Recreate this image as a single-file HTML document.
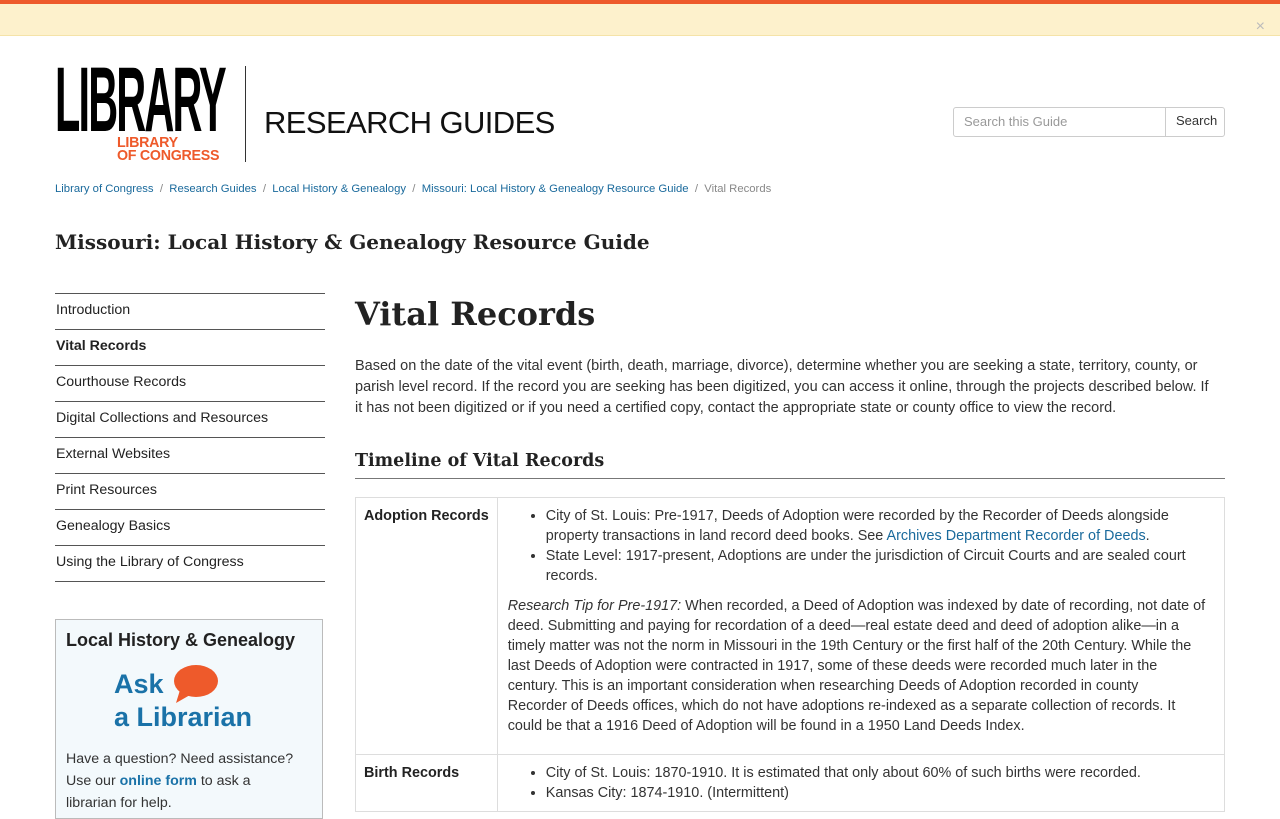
<!DOCTYPE html>
<html><head><meta charset="utf-8"><style>
*{box-sizing:border-box}
body{margin:0;background:#fff;font-family:"Liberation Sans",sans-serif;color:#333;font-size:14px;width:1280px;height:800px;overflow:hidden;position:relative}
a{color:#1a6a9c;text-decoration:none}
.topbar{position:absolute;left:0;top:0;width:1280px;height:4px;background:#ee5a2b}
.alert{position:absolute;left:0;top:4px;width:1280px;height:32px;background:#fdf1cc;border-bottom:1px solid #f5e3a8}
.x{position:absolute;right:15px;top:14px;color:#bbb;font-size:16px}
.abs{position:absolute}
.serif{font-family:"DejaVu Serif","Liberation Serif",serif;font-weight:bold;color:#222}
.nav{position:absolute;left:55px;top:293px;width:270px;border-top:1px solid #555}
.nav div{height:36px;border-bottom:1px solid #555;padding:7px 1px;font-size:14.2px;color:#222;line-height:18px}
.box{position:absolute;left:55px;top:619px;width:268px;height:200px;border:1px solid #bbb;background:#f3f9fc;padding:10px}
table{position:absolute;left:355px;top:497px;width:870px;border-collapse:collapse}
td{border:1px solid #ddd;vertical-align:top;padding:8px;font-size:14.4px;line-height:20px}
ul{margin:0;padding-left:40px}
p{margin:0}
</style></head><body>
<div class="topbar"></div>
<div class="alert"><span class="x">×</span></div>
<div class="abs" style="left:55px;top:54px;font-weight:bold;font-size:92px;line-height:92px;letter-spacing:-4px;transform:scaleX(0.45);transform-origin:left top;color:#000;white-space:nowrap">LIBRARY</div>
<div class="abs" style="left:117px;top:136px;color:#ee5a2b;font-weight:bold;font-size:15px;line-height:13px;letter-spacing:-0.3px;transform:scaleX(0.95);transform-origin:left">LIBRARY<br>OF CONGRESS</div>
<div class="abs" style="left:245px;top:66px;width:1px;height:96px;background:#333"></div>
<div class="abs" style="left:264px;top:105px;font-size:31px;color:#111;letter-spacing:-0.6px">RESEARCH GUIDES</div>
<div class="abs" style="left:953px;top:107px;width:272px;height:30px;border:1px solid #ccc;border-radius:3px"></div>
<div class="abs" style="left:1165px;top:107px;width:1px;height:30px;background:#ccc"></div>
<div class="abs" style="left:964px;top:114px;color:#999;font-size:13px">Search this Guide</div>
<div class="abs" style="left:1176px;top:113px;color:#333;font-size:13px">Search</div>
<div class="abs" style="left:55px;top:183px;font-size:11.3px;color:#888"><a>Library of Congress</a> &nbsp;/&nbsp; <a>Research Guides</a> &nbsp;/&nbsp; <a>Local History &amp; Genealogy</a> &nbsp;/&nbsp; <a>Missouri: Local History &amp; Genealogy Resource Guide</a> &nbsp;/&nbsp; Vital Records</div>
<div class="abs serif" style="left:55px;top:230px;font-size:20px">Missouri: Local History &amp; Genealogy Resource Guide</div>
<div class="nav"><div>Introduction</div><div style="font-weight:bold">Vital Records</div><div>Courthouse Records</div><div>Digital Collections and Resources</div><div>External Websites</div><div>Print Resources</div><div>Genealogy Basics</div><div>Using the Library of Congress</div></div>
<div class="box">
<div style="font-weight:bold;font-size:18px;color:#222">Local History &amp; Genealogy</div>
<div style="position:absolute;left:58px;top:48px;color:#1a72a8;font-weight:bold;font-size:27px;line-height:33px">Ask<br>a Librarian</div>
<svg style="position:absolute;left:116px;top:44px" width="48" height="40" viewBox="0 0 48 40"><ellipse cx="24" cy="17" rx="22" ry="16" fill="#ee5a2b"/><path d="M8 26 L4 39 L18 31Z" fill="#ee5a2b"/></svg>
<div style="position:absolute;left:10px;top:128px;font-size:14.2px;line-height:22px;color:#333">Have a question? Need assistance?<br>Use our <b style="color:#1a72a8">online form</b> to ask a<br>librarian for help.</div>
</div>
<div class="abs serif" style="left:355px;top:295px;font-size:32px">Vital Records</div>
<div class="abs" style="left:355px;top:356px;width:875px;font-size:14.5px;line-height:21px">Based on the date of the vital event (birth, death, marriage, divorce), determine whether you are seeking a state, territory, county, or<br>parish level record. If the record you are seeking has been digitized, you can access it online, through the projects described below. If<br>it has not been digitized or if you need a certified copy, contact the appropriate state or county office to view the record.</div>
<div class="abs serif" style="left:355px;top:451px;font-size:17.5px">Timeline of Vital Records</div>
<div class="abs" style="left:355px;top:478px;width:870px;height:1px;background:#777"></div>
<table>
<tr style="height:257px"><td style="width:140px;font-weight:bold;color:#222;white-space:nowrap">Adoption Records</td><td style="padding-left:10px"><ul style="padding-left:38px"><li>City of St. Louis: Pre-1917, Deeds of Adoption were recorded by the Recorder of Deeds alongside<br>property transactions in land record deed books. See <a>Archives Department Recorder of Deeds</a>.</li><li>State Level: 1917-present, Adoptions are under the jurisdiction of Circuit Courts and are sealed court<br>records.</li></ul>
<p style="margin-top:10px"><i>Research Tip for Pre-1917:</i> When recorded, a Deed of Adoption was indexed by date of recording, not date of<br>deed. Submitting and paying for recordation of a deed—real estate deed and deed of adoption alike—in a<br>timely matter was not the norm in Missouri in the 19th Century or the first half of the 20th Century. While the<br>last Deeds of Adoption were contracted in 1917, some of these deeds were recorded much later in the<br>century. This is an important consideration when researching Deeds of Adoption recorded in county<br>Recorder of Deeds offices, which do not have adoptions re-indexed as a separate collection of records. It<br>could be that a 1916 Deed of Adoption will be found in a 1950 Land Deeds Index.</p></td></tr>
<tr><td style="font-weight:bold;color:#222">Birth Records</td><td style="padding-left:10px"><ul style="padding-left:38px"><li>City of St. Louis: 1870-1910. It is estimated that only about 60% of such births were recorded.</li><li>Kansas City: 1874-1910. (Intermittent)</li></ul></td></tr>
</table>
</body></html>
